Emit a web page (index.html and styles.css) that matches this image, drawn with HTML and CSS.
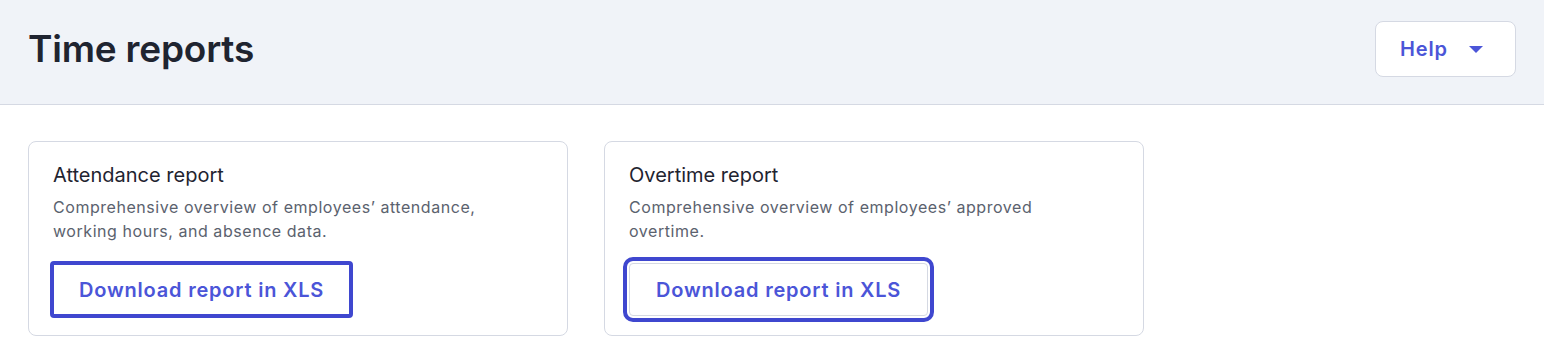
FILE: index.html
```html
<!DOCTYPE html>
<html lang="en">
<head>
	<meta charset="UTF-8">
	<title>Time reports</title>
	<link rel="stylesheet" href="styles.css">
</head>
<body>
	<div class="page-head">
		<h1 class="page-title">Time reports</h1>
		<button type="button" class="help-btn">
			<span>Help</span>
			<svg width="24" height="24" viewBox="0 0 24 24"><path d="M5 9h14l-7 7z" fill="currentColor"/></svg>
		</button>
	</div>
	<div class="report-list">
		<div class="report-card">
			<h2 class="r-title">Attendance report</h2>
			<p class="r-desc">Comprehensive overview of employees’ attendance, working hours, and absence data.</p>
			<button type="button" class="dl-btn focus-a">Download report in XLS</button>
		</div>
		<div class="report-card">
			<h2 class="r-title">Overtime report</h2>
			<p class="r-desc">Comprehensive overview of employees’ approved overtime.</p>
			<button type="button" class="dl-btn focus-b">Download report in XLS</button>
		</div>
	</div>
</body>
</html>
```

FILE: styles.css
```css
/* Reset */
body,h1,h2,p,div,button{ margin:0; padding:0; border:0; outline:0; font-size:100%; background:transparent;}
h1,h2{ font-weight:normal;}
body{ font-family:Inter, "Noto Sans", sans-serif; color:#1f2430; background:#fff;}

/* 顶部标题栏 */
.page-head{
	display: flex;
	align-items: center;
	justify-content: space-between;
	padding: 21px 28px 27px;
	background-color: #f0f3f8;
	border-bottom: 1px solid #d5d9e3;
}
.page-title{
	font-size: 37px;
	font-weight: 600;
	line-height: 56px;
	color: #1f2430;
	letter-spacing: -0.2px;
}
.help-btn{
	display: flex;
	align-items: center;
	gap: 16px;
	height: 56px;
	padding: 0 27px 0 24px;
	background-color: #fff;
	border: 1px solid #d5d9e3;
	border-radius: 8px;
	font-family: inherit;
	font-size: 20px;
	font-weight: 600;
	letter-spacing: 0.9px;
	color: #4b55d8;
	cursor: pointer;
}
.help-btn svg{ display:block;}

/* 报表卡片 */
.report-list{
	display: flex;
	gap: 36px;
	padding: 36px 28px 0;
}
.report-card{
	width: 540px;
	box-sizing: border-box;
	padding: 19px 24px;
	border: 1px solid #d5d9e3;
	border-radius: 8px;
	background-color: #fff;
}
.r-title{
	font-size: 20px;
	line-height: 28px;
	color: #1f2430;
}
.r-desc{
	max-width: 460px;
	margin-top: 6px;
	font-size: 16px;
	line-height: 24px;
	letter-spacing: 0.55px;
	color: #5b626e;
}
.dl-btn{
	display: block;
	height: 53px;
	margin-top: 20px;
	padding: 0 26px;
	background-color: #fff;
	border: 1px solid #d5d9e3;
	border-radius: 6px;
	font-family: inherit;
	font-size: 20px;
	font-weight: 600;
	letter-spacing: 0.8px;
	color: #4b55d8;
	cursor: pointer;
}
.focus-a{
	margin-left: -1px;
	outline: 4px solid #3f47cf;
	outline-offset: -2px;
	border-radius: 2px;
}
.focus-b{
	outline: 4px solid #3f47cf;
	outline-offset: 2px;
	border-radius: 4px;
}
```
